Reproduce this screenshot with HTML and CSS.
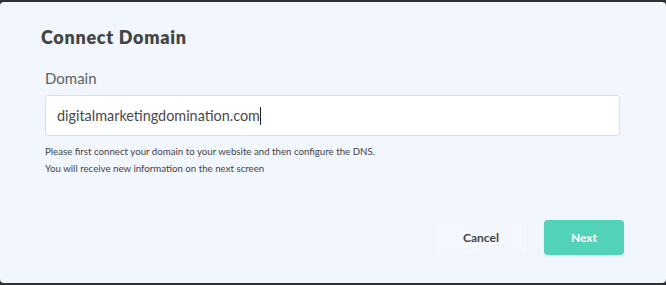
FILE: index.html
```html
<!DOCTYPE html>
<html lang="en">
<head>
    <meta charset="UTF-8">
    <title>Connect Domain</title>
    <link rel="stylesheet" href="styles.css">
</head>
<body>

<div class="modal">
    <h2 class="modal-title">Connect Domain</h2>

    <div class="field">
        <label class="field-label" for="domain">Domain</label>
        <div class="field-input">
            <span class="value">digitalmarketingdomination.com</span><span class="caret"></span>
        </div>
        <p class="hint">Please first connect your domain to your website and then configure the DNS.</p>
        <p class="hint">You will receive new information on the next screen</p>
    </div>

    <div class="actions">
        <button class="btn btn-cancel">Cancel</button>
        <button class="btn btn-next">Next</button>
    </div>
</div>

</body>
</html>
```

FILE: styles.css
```css
body {
    margin: 0;
    padding: 2px 0 0 0;
    background: #2f3033;
    font-family: 'Lato', sans-serif;
    overflow: hidden;
}

.modal {
    background: #f2f6fe;
    height: 281px;
    border-radius: 4px;
    box-sizing: border-box;
    padding: 25px 46px 0 41px;
    display: flex;
    flex-direction: column;
}

.modal-title {
    margin: 0;
    font-size: 18px;
    font-weight: 800;
    letter-spacing: 0.7px;
    color: #444;
    line-height: 20px;
}

.field {
    margin-top: 22px;
    padding-left: 4px;
}

.field-label {
    display: block;
    font-size: 15px;
    color: #5f5f5f;
    line-height: 18px;
    margin-left: 0;
}

.field-input {
    margin-top: 8px;
    height: 41px;
    box-sizing: border-box;
    background: #fff;
    border: 1px solid #dcdfe6;
    border-radius: 3px;
    padding: 0 11px;
    display: flex;
    align-items: center;
    font-size: 14.4px;
    color: #4a4a4a;
}

.caret {
    display: inline-block;
    width: 1px;
    height: 18px;
    background: #222;
}

.hint {
    margin: 0;
    font-size: 9.7px;
    color: #444;
    line-height: 17px;
}

.field-input + .hint {
    margin-top: 7px;
}

.actions {
    margin-top: auto;
    margin-bottom: 28px;
    display: flex;
    justify-content: flex-end;
    gap: 16px;
    margin-right: -4px;
}

.btn {
    font-family: 'Lato', sans-serif;
    font-weight: 700;
    font-size: 12px;
    height: 35px;
    border-radius: 4px;
    cursor: pointer;
}

.btn-cancel {
    width: 94px;
    background: #f4f7ff;
    border: 1px solid #f0f3fb;
    color: #444;
}

.btn-next {
    width: 80px;
    background: #52d3b8;
    border: none;
    color: #fff;
    box-shadow: 0 1px 2px rgba(0, 0, 0, 0.08);
}
```
